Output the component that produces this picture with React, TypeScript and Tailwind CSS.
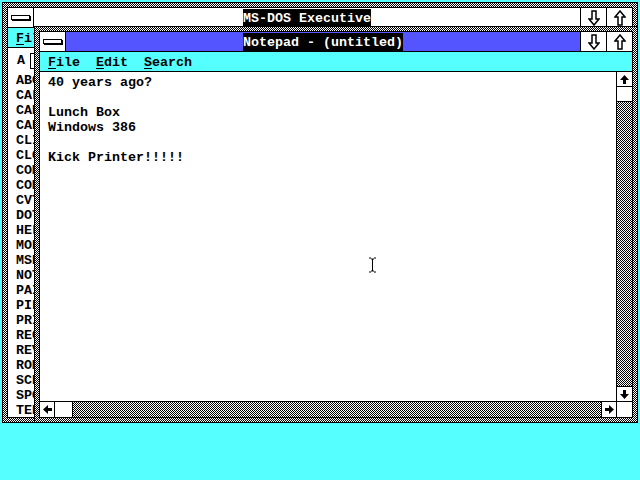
const checker =
  'bg-[image:repeating-conic-gradient(#000_0_25%,#fff_0_50%)] bg-[length:2px_2px]';

const files = [
  'ABC', 'CAL', 'CAR', 'CAR', 'CLI', 'CLO', 'COM', 'COM', 'CVT', 'DOT', 'HEL', 'MOD',
  'MSD', 'NOT', 'PAI', 'PIF', 'PRI', 'REC', 'REV', 'ROM', 'SCR', 'SPO', 'TER',
];

const noteLines = ['40 years ago?', '', 'Lunch Box', 'Windows 386', '', 'Kick Printer!!!!!'];

const HollowArrow = ({ up }: { up?: boolean }) => (
  <svg width="12" height="16" viewBox="0 0 12 16" className={up ? '' : 'rotate-180'}>
    <polygon
      points="6,1 11,7 8,7 8,15 4,15 4,7 1,7"
      fill="#fff"
      stroke="#000"
      strokeWidth="1.5"
      strokeLinejoin="miter"
    />
  </svg>
);

const SolidArrow = ({ dir }: { dir: 'up' | 'down' | 'left' | 'right' }) => {
  const rot = {
    up: '',
    down: 'rotate-180',
    left: '-rotate-90',
    right: 'rotate-90',
  }[dir];
  return (
    <svg width="11" height="11" viewBox="0 0 11 11" className={rot}>
      <polygon points="5.5,1 10,6 7,6 7,10 4,10 4,6 1,6" fill="#000" />
    </svg>
  );
};

const SysBox = () => (
  <div className="w-[26px] shrink-0 border-r border-black bg-white flex items-center justify-center">
    <div className="w-[19px] h-[5px] border border-black bg-white shadow-[1px_1px_0_#000] -mt-[1px]" />
  </div>
);

const SizeButtons = () => (
  <>
    <div className="w-[26px] shrink-0 border-l border-black bg-white flex items-center justify-center">
      <HollowArrow />
    </div>
    <div className="w-[26px] shrink-0 border-l border-black bg-white flex items-center justify-center">
      <HollowArrow up />
    </div>
  </>
);

const Title = ({ text }: { text: string }) => (
  <span className="bg-black text-white pt-[1px] leading-[17px]">{text}</span>
);

const Underlined = ({ text }: { text: string }) => (
  <span>
    <span className="underline underline-offset-2">{text[0]}</span>
    {text.slice(1)}
  </span>
);

export default function App() {
  return (
    <div
      className="relative w-[640px] h-[480px] bg-[#55ffff] overflow-hidden text-black font-bold text-[13.33px]"
      style={{ fontFamily: '"Liberation Mono", "DejaVu Sans Mono", monospace' }}
    >
      {/* MS-DOS Executive */}
      <div className={`absolute left-[2px] top-[2px] w-[636px] h-[421px] border border-black p-[4px] ${checker}`}>
        <div className="h-full border border-black bg-white flex flex-col">
          <div className="h-[20px] shrink-0 flex border-b border-black">
            <SysBox />
            <div className="flex-1 bg-white flex items-center justify-center">
              <Title text="MS-DOS Executive" />
            </div>
            <SizeButtons />
          </div>
          <div className="h-[20px] shrink-0 bg-[#55ffff] border-b border-black flex items-center pl-[8px] pt-[2px]">
            <Underlined text="File" />
          </div>
          <div className="h-[24px] shrink-0 flex items-center pl-[9px] gap-[5px] pt-[1px]">
            <span>A</span>
            <div className="w-[20px] h-[16px] border border-black" />
          </div>
          <div className="flex flex-col pl-[8px] pt-[1px]">
            {files.map((f, i) => (
              <div key={i} className="h-[15px] leading-[15px]">
                {f}
              </div>
            ))}
          </div>
        </div>
      </div>

      {/* Notepad */}
      <div className={`absolute left-[34px] top-[26px] w-[604px] h-[397px] border border-black p-[4px] ${checker}`}>
        <div className="h-full border border-black bg-white flex flex-col">
          <div className="h-[20px] shrink-0 flex border-b border-black">
            <SysBox />
            <div className="flex-1 bg-[#5555ff] flex items-center justify-center">
              <Title text="Notepad - (untitled)" />
            </div>
            <SizeButtons />
          </div>
          <div className="h-[20px] shrink-0 bg-[#55ffff] border-b border-black flex items-center pl-[8px] gap-[16px] pt-[2px]">
            <Underlined text="File" />
            <Underlined text="Edit" />
            <Underlined text="Search" />
          </div>
          <div className="flex-1 flex min-h-0">
            <div className="relative flex-1 pl-[8px] pt-[3px]">
              {noteLines.map((l, i) => (
                <div key={i} className="h-[15px] leading-[15px] whitespace-pre">
                  {l}
                </div>
              ))}
              {/* I-beam cursor */}
              <svg className="absolute left-[328px] top-[185px]" width="9" height="16" viewBox="0 0 9 16">
                <path d="M1 1h2M6 1h2M3 2h3M4.5 2v12M3 14h3M1 15h2M6 15h2" stroke="#000" strokeWidth="1" fill="none" />
              </svg>
            </div>
            <div className="w-[16px] shrink-0 border-l border-black flex flex-col">
              <div className="h-[15px] shrink-0 border-b border-black bg-white flex items-center justify-center">
                <SolidArrow dir="up" />
              </div>
              <div className="h-[15px] shrink-0 border-b border-black bg-white" />
              <div className={`flex-1 ${checker}`} />
              <div className="h-[15px] shrink-0 border-t border-black bg-white flex items-center justify-center">
                <SolidArrow dir="down" />
              </div>
            </div>
          </div>
          <div className="h-[16px] shrink-0 border-t border-black flex">
            <div className="w-[15px] shrink-0 border-r border-black bg-white flex items-center justify-center">
              <SolidArrow dir="left" />
            </div>
            <div className="w-[18px] shrink-0 border-r border-black bg-white" />
            <div className={`flex-1 ${checker}`} />
            <div className="w-[15px] shrink-0 border-l border-black bg-white flex items-center justify-center">
              <SolidArrow dir="right" />
            </div>
            <div className="w-[16px] shrink-0 border-l border-black bg-white" />
          </div>
        </div>
      </div>
    </div>
  );
}
